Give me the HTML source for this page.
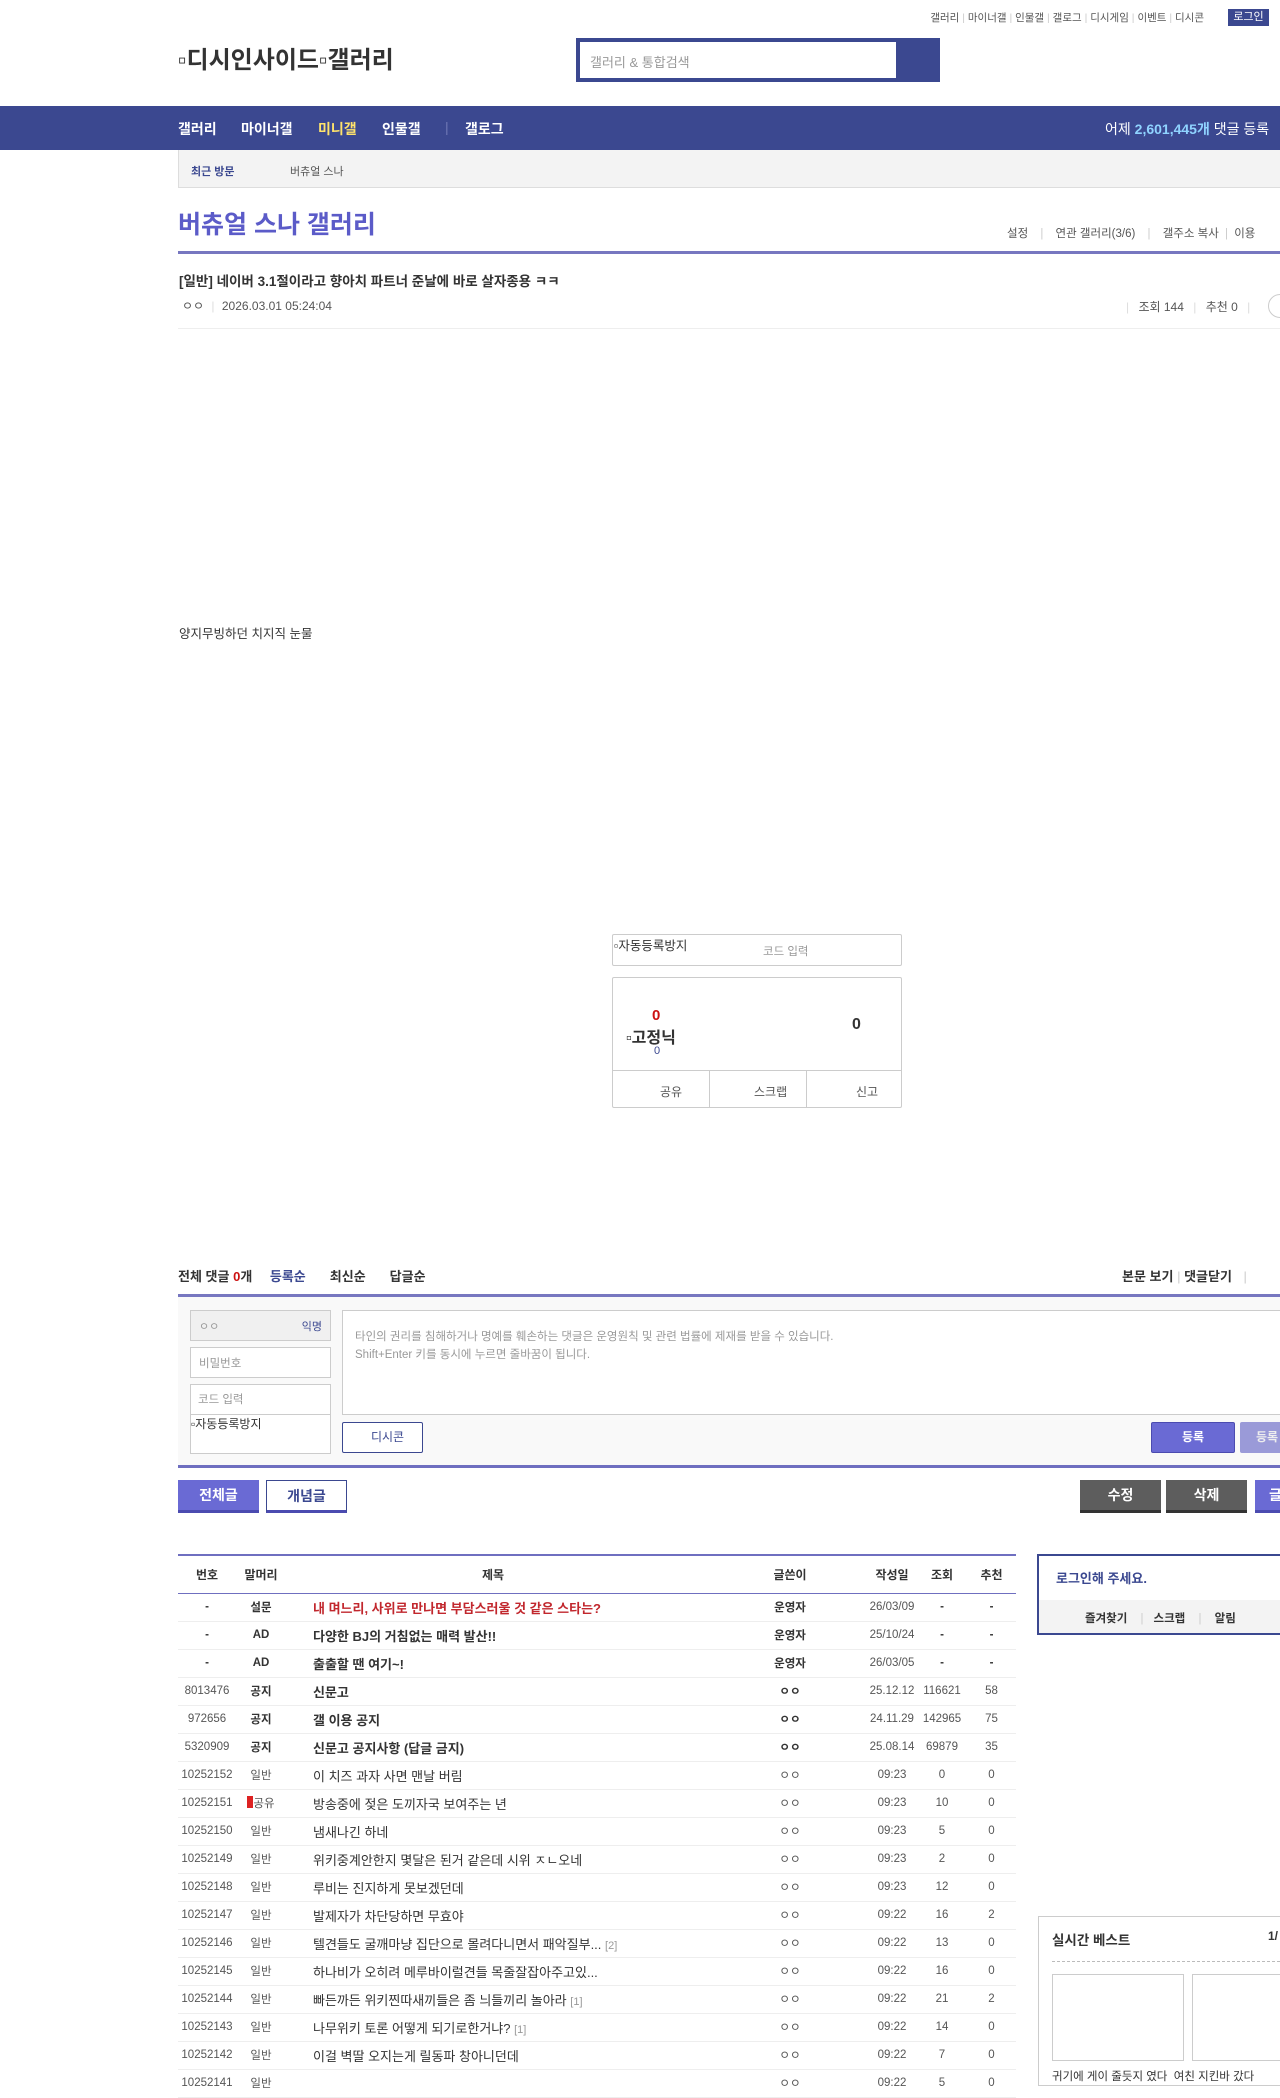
<!DOCTYPE html>
<html><head><meta charset="utf-8">
<style>
*{margin:0;padding:0;box-sizing:border-box}
body{width:1280px;height:2078px;overflow:hidden;position:relative;background:#fff;font-family:"Liberation Sans","Noto Sans CJK KR",sans-serif;color:#333;font-size:12px}
.a{position:absolute;white-space:nowrap}
.nav{position:absolute;left:0;top:106px;width:1280px;height:44px;background:#3b4890}
.nav span{position:absolute;top:13px;color:#fff;font-size:14px;font-weight:bold}
table{border-collapse:collapse;position:absolute;left:178px;top:1554px;width:838px;border-top:2px solid #6f6fc0;font-size:11.5px;table-layout:fixed}
th{height:38px;font-weight:bold;color:#333;border-bottom:1px solid #6f6fc0;font-size:12px}
td{height:28px;border-bottom:1px solid #eee;text-align:center;color:#555;white-space:nowrap}
td.t{text-align:left;padding-left:27px;color:#333;font-size:13px}
td.w,th.w{padding-right:17px}
.b td{font-weight:bold;color:#333}
.btn{position:absolute;height:33px;font-size:14px;font-weight:bold;text-align:center;line-height:31px}
</style></head><body>
<div class="a" style="right:76px;top:10px;font-size:10.5px;color:#555">갤러리 <span style="color:#ccc">|</span> 마이너갤 <span style="color:#ccc">|</span> 인물갤 <span style="color:#ccc">|</span> 갤로그 <span style="color:#ccc">|</span> 디시게임 <span style="color:#ccc">|</span> 이벤트 <span style="color:#ccc">|</span> 디시콘</div>
<div class="a" style="left:1228px;top:9px;width:41px;height:17px;background:#3b4890;color:#fff;font-size:11px;text-align:center;line-height:17px">로그인</div>
<div class="a" style="left:178px;top:40px;font-size:24px;font-weight:bold;color:#333">▫디시인사이드▫갤러리</div>
<div class="a" style="left:576px;top:38px;width:364px;height:44px;background:#3b4890"></div>
<div class="a" style="left:580px;top:42px;width:316px;height:36px;background:#fff;color:#999;font-size:13px;padding:10px 10px">갤러리 &amp; 통합검색</div>
<div class="nav">
<span style="left:178px">갤러리</span><span style="left:241px">마이너갤</span><span style="left:318px;color:#ffe36b">미니갤</span><span style="left:382px">인물갤</span><span style="left:445px;color:#6f78b5;font-weight:normal">|</span><span style="left:465px">갤로그</span>
<span style="left:1105px;font-weight:normal">어제 <b style="color:#8fd3ff">2,601,445개</b> 댓글 등록</span>
</div>
<div class="a" style="left:178px;top:150px;width:1102px;height:38px;background:#f3f3f3;border-left:1px solid #ddd;border-bottom:1px solid #ddd"></div>
<div class="a" style="left:191px;top:163px;font-size:11px;font-weight:bold;color:#3b4890">최근 방문</div>
<div class="a" style="left:290px;top:163px;font-size:11px;color:#555">버츄얼 스나</div>
<div class="a" style="left:178px;top:205px;font-size:25px;font-weight:bold;color:#5b5bc8">버츄얼 스나 갤러리</div>
<div class="a" style="left:1007px;top:225px;font-size:11.5px;color:#555">설정 <span style="color:#ccc;margin:0 9px">|</span> 연관 갤러리(3/6) <span style="color:#ccc;margin:0 9px">|</span> 갤주소 복사 <span style="color:#ccc;margin:0 3px">|</span> 이용</div>
<div class="a" style="left:178px;top:251px;width:1102px;height:3px;background:#7777c0"></div>
<div class="a" style="left:179px;top:270px;font-size:13.5px;font-weight:bold;color:#333">[일반] 네이버 3.1절이라고 향아치 파트너 준날에 바로 살자종용 ㅋㅋ</div>
<div class="a" style="left:182px;top:297px;font-size:12px;color:#555">ㅇㅇ <span style="color:#ddd;margin:0 4px">|</span> 2026.03.01 05:24:04</div>
<div class="a" style="left:1126px;top:298px;font-size:12px;color:#555"><span style="color:#ddd;margin-right:6px">|</span> 조회 144 <span style="color:#ddd;margin:0 6px">|</span> 추천 0 <span style="color:#ddd;margin-left:6px">|</span></div>
<div class="a" style="left:1268px;top:294px;width:24px;height:24px;border:1px solid #ccc;border-radius:50%"></div>
<div class="a" style="left:178px;top:328px;width:1102px;height:1px;background:#eee"></div>
<div class="a" style="left:179px;top:623px;font-size:12.5px;color:#333">양지무빙하던 치지직 눈물</div>
<div class="a" style="left:612px;top:934px;width:290px;height:32px;border:1px solid #ccc;border-radius:2px"></div>
<div class="a" style="left:614px;top:935px;font-size:12.5px;color:#333">▫자동등록방지</div>
<div class="a" style="left:763px;top:943px;font-size:11.5px;color:#999">코드 입력</div>
<div class="a" style="left:612px;top:977px;width:290px;height:131px;border:1px solid #ccc;border-radius:2px"></div>
<div class="a" style="left:612px;top:1070px;width:290px;height:1px;background:#ccc"></div>
<div class="a" style="left:709px;top:1070px;width:1px;height:38px;background:#ccc"></div>
<div class="a" style="left:806px;top:1070px;width:1px;height:38px;background:#ccc"></div>
<div class="a" style="left:652px;top:1007px;font-size:15px;font-weight:bold;color:#c11">0</div>
<div class="a" style="left:626px;top:1024px;font-size:16px;font-weight:bold;color:#333">▫고정닉</div>
<div class="a" style="left:654px;top:1045px;font-size:11px;color:#3b4890">0</div>
<div class="a" style="left:852px;top:1016px;font-size:16px;font-weight:bold;color:#333">0</div>
<div class="a" style="left:660px;top:1083px;font-size:12px;color:#555">공유</div>
<div class="a" style="left:754px;top:1083px;font-size:12px;color:#555">스크랩</div>
<div class="a" style="left:856px;top:1083px;font-size:12px;color:#555">신고</div>
<div class="a" style="left:178px;top:1266px;font-size:13px;font-weight:bold;color:#333">전체 댓글 <span style="color:#c11">0</span>개 <span style="color:#3b4890;margin-left:14px">등록순</span><span style="margin-left:24px">최신순</span><span style="margin-left:24px">답글순</span></div>
<div class="a" style="left:1122px;top:1266px;font-size:13px;font-weight:bold;color:#333">본문 보기 <span style="color:#ccc;font-weight:normal">|</span> 댓글닫기 <span style="color:#ccc;font-weight:normal;margin-left:8px">|</span></div>
<div class="a" style="left:178px;top:1294px;width:1102px;height:3px;background:#7777c0"></div>
<div class="a" style="left:178px;top:1297px;width:1102px;height:168px;background:#f9f9f9"></div>
<div class="a" style="left:190px;top:1310px;width:141px;height:31px;background:#f0f0f0;border:1px solid #ccc;color:#999;font-size:11px;padding:7px 8px">ㅇㅇ<span style="float:right;color:#3b4890">익명</span></div>
<div class="a" style="left:190px;top:1347px;width:141px;height:31px;background:#fff;border:1px solid #ccc;color:#999;font-size:11.5px;padding:7px 8px">비밀번호</div>
<div class="a" style="left:190px;top:1384px;width:141px;height:70px;background:#fff;border:1px solid #ccc"></div>
<div class="a" style="left:190px;top:1414px;width:141px;height:1px;background:#ccc"></div>
<div class="a" style="left:198px;top:1391px;color:#999;font-size:11.5px">코드 입력</div>
<div class="a" style="left:191px;top:1415px;color:#333;font-size:12px">▫자동등록방지</div>
<div class="a" style="left:342px;top:1310px;width:940px;height:105px;background:#fff;border:1px solid #ccc;color:#999;font-size:11.5px;padding:17px 12px;line-height:18px">타인의 권리를 침해하거나 명예를 훼손하는 댓글은 운영원칙 및 관련 법률에 제재를 받을 수 있습니다.<br>Shift+Enter 키를 동시에 누르면 줄바꿈이 됩니다.</div>
<div class="a" style="left:342px;top:1422px;width:81px;height:31px;background:#fff;border:1px solid #3b4890;border-radius:2px;color:#3b4890;font-size:12px;text-align:center;line-height:29px">&nbsp;&nbsp;&nbsp;디시콘</div>
<div class="a" style="left:1151px;top:1422px;width:84px;height:31px;background:#6a6ad4;border:1px solid #4b4bb0;border-radius:2px;color:#fff;font-size:12px;font-weight:bold;text-align:center;line-height:29px">등록</div>
<div class="a" style="left:1240px;top:1422px;width:60px;height:31px;background:#9a9ad8;border-radius:2px;color:#eee;font-size:12px;font-weight:bold;line-height:31px;padding-left:16px">등록</div>
<div class="a" style="left:178px;top:1465px;width:1102px;height:3px;background:#6f6fc0"></div>
<div class="btn" style="left:178px;top:1480px;width:81px;background:#6a6ad4;color:#fff;border-bottom:3px solid #4b4bb0">전체글</div>
<div class="btn" style="left:266px;top:1480px;width:81px;background:#fff;color:#3b4890;border:1px solid #3b4890;border-bottom:3px solid #4b4bb0">개념글</div>
<div class="btn" style="left:1080px;top:1480px;width:81px;background:#5d5d5d;color:#fff;border-bottom:3px solid #333">수정</div>
<div class="btn" style="left:1166px;top:1480px;width:81px;background:#5d5d5d;color:#fff;border-bottom:3px solid #333">삭제</div>
<div class="btn" style="left:1255px;top:1480px;width:60px;background:#6a6ad4;color:#fff;border-bottom:3px solid #4b4bb0;text-align:left;padding-left:14px">글</div>
<table>
<colgroup><col style="width:58px"><col style="width:50px"><col style="width:444px"><col style="width:137px"><col style="width:50px"><col style="width:50px"><col style="width:49px"></colgroup>
<tr><th>번호</th><th>말머리</th><th style="padding-right:30px">제목</th><th class="w">글쓴이</th><th>작성일</th><th>조회</th><th>추천</th></tr>
<tr class="b"><td>-</td><td>설문</td><td class="t" style="color:#c1272d">내 며느리, 사위로 만나면 부담스러울 것 같은 스타는?</td><td class="w">운영자</td><td style="font-weight:normal;color:#555">26/03/09</td><td>-</td><td>-</td></tr>
<tr class="b"><td>-</td><td>AD</td><td class="t">다양한 BJ의 거침없는 매력 발산!!</td><td class="w">운영자</td><td style="font-weight:normal;color:#555">25/10/24</td><td>-</td><td>-</td></tr>
<tr class="b"><td>-</td><td>AD</td><td class="t">출출할 땐 여기~!</td><td class="w">운영자</td><td style="font-weight:normal;color:#555">26/03/05</td><td>-</td><td>-</td></tr>
<tr><td>8013476</td><td><b style="color:#333">공지</b></td><td class="t"><b>신문고</b></td><td class="w"><b style="color:#333">ㅇㅇ</b></td><td>25.12.12</td><td>116621</td><td>58</td></tr>
<tr><td>972656</td><td><b style="color:#333">공지</b></td><td class="t"><b>갤 이용 공지</b></td><td class="w"><b style="color:#333">ㅇㅇ</b></td><td>24.11.29</td><td>142965</td><td>75</td></tr>
<tr><td>5320909</td><td><b style="color:#333">공지</b></td><td class="t"><b>신문고 공지사항 (답글 금지)</b></td><td class="w"><b style="color:#333">ㅇㅇ</b></td><td>25.08.14</td><td>69879</td><td>35</td></tr>
<tr><td>10252152</td><td>일반</td><td class="t">이 치즈 과자 사면 맨날 버림</td><td class="w">ㅇㅇ</td><td>09:23</td><td>0</td><td>0</td></tr>
<tr><td>10252151</td><td><span style="display:inline-block;width:6px;height:12px;background:#d22;vertical-align:-1px"></span>공유</td><td class="t">방송중에 젖은 도끼자국 보여주는 년</td><td class="w">ㅇㅇ</td><td>09:23</td><td>10</td><td>0</td></tr>
<tr><td>10252150</td><td>일반</td><td class="t">냄새나긴 하네</td><td class="w">ㅇㅇ</td><td>09:23</td><td>5</td><td>0</td></tr>
<tr><td>10252149</td><td>일반</td><td class="t">위키중계안한지 몇달은 된거 같은데 시위 ㅈㄴ오네</td><td class="w">ㅇㅇ</td><td>09:23</td><td>2</td><td>0</td></tr>
<tr><td>10252148</td><td>일반</td><td class="t">루비는 진지하게 못보겠던데</td><td class="w">ㅇㅇ</td><td>09:23</td><td>12</td><td>0</td></tr>
<tr><td>10252147</td><td>일반</td><td class="t">발제자가 차단당하면 무효야</td><td class="w">ㅇㅇ</td><td>09:22</td><td>16</td><td>2</td></tr>
<tr><td>10252146</td><td>일반</td><td class="t">텔견들도 굴깨마냥 집단으로 몰려다니면서 패악질부... <span style="color:#999;font-size:11px">[2]</span></td><td class="w">ㅇㅇ</td><td>09:22</td><td>13</td><td>0</td></tr>
<tr><td>10252145</td><td>일반</td><td class="t">하나비가 오히려 메루바이럴견들 목줄잘잡아주고있...</td><td class="w">ㅇㅇ</td><td>09:22</td><td>16</td><td>0</td></tr>
<tr><td>10252144</td><td>일반</td><td class="t">빠든까든 위키찐따새끼들은 좀 늬들끼리 놀아라 <span style="color:#999;font-size:11px">[1]</span></td><td class="w">ㅇㅇ</td><td>09:22</td><td>21</td><td>2</td></tr>
<tr><td>10252143</td><td>일반</td><td class="t">나무위키 토론 어떻게 되기로한거냐? <span style="color:#999;font-size:11px">[1]</span></td><td class="w">ㅇㅇ</td><td>09:22</td><td>14</td><td>0</td></tr>
<tr><td>10252142</td><td>일반</td><td class="t">이걸 벽딸 오지는게 릴동파 창아니던데</td><td class="w">ㅇㅇ</td><td>09:22</td><td>7</td><td>0</td></tr>
<tr><td>10252141</td><td>일반</td><td class="t">&nbsp;</td><td class="w">ㅇㅇ</td><td>09:22</td><td>5</td><td>0</td></tr>
</table>
<div class="a" style="left:1037px;top:1554px;width:260px;height:81px;border:2px solid #3b4890;border-right:none"></div>
<div class="a" style="left:1039px;top:1600px;width:241px;height:33px;background:#f3f3f3"></div>
<div class="a" style="left:1056px;top:1568px;font-size:13px;font-weight:bold;color:#3b4890">로그인해 주세요.</div>
<div class="a" style="left:1085px;top:1610px;font-size:11.5px;font-weight:bold;color:#333">즐겨찾기 <span style="color:#ccc;font-weight:normal;margin:0 10px">|</span>스크랩 <span style="color:#ccc;font-weight:normal;margin:0 10px">|</span> 알림</div>
<div class="a" style="left:1038px;top:1916px;width:260px;height:170px;border:1px solid #ccc;border-right:none"></div>
<div class="a" style="left:1052px;top:1929px;font-size:13.5px;font-weight:bold;color:#333">실시간 베스트</div>
<div class="a" style="left:1268px;top:1929px;font-size:12px;font-weight:bold;color:#333">1/</div>
<div class="a" style="left:1052px;top:1961px;width:228px;border-top:1px dashed #bbb"></div>
<div class="a" style="left:1052px;top:1974px;width:132px;height:87px;border:1px solid #ccc"></div>
<div class="a" style="left:1192px;top:1974px;width:100px;height:87px;border:1px solid #ccc"></div>
<div class="a" style="left:1052px;top:2068px;font-size:11.5px;color:#333">귀기에 게이 줄듯지 였다 &nbsp;여친 지킨바 갔다</div>
</body></html>
